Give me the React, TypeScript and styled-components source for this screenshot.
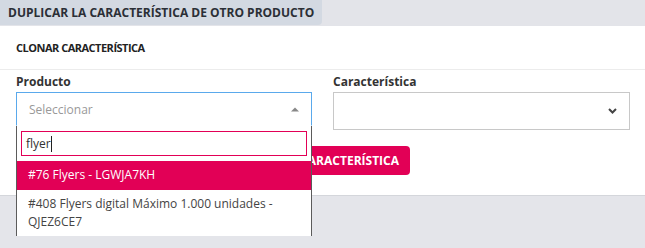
import React from "react"
import styled, { createGlobalStyle } from "styled-components"

const GlobalStyle = createGlobalStyle`
   html, body {
      margin: 0;
      padding: 0;
      background: #e4e5ea;
      font-family: "Open Sans", "Liberation Sans", sans-serif;
      color: #333;
   }
   * { box-sizing: border-box; }
`

const crimson = "#e20056"

const Page = styled.div`
   width: 645px;
   height: 248px;
   overflow: hidden;
   background: #e4e5ea;
`

const HeaderBar = styled.div`
   display: flex;
   height: 26px;
   background: #e3e4e9;
`

const HeaderTab = styled.h3`
   margin: 0;
   display: flex;
   align-items: center;
   width: 322px;
   height: 25px;
   padding: 0 8px;
   background: #d3d9e2;
   border-bottom-right-radius: 4px;
   font-size: 12px;
   font-weight: 700;
   color: #2b2f36;
   white-space: nowrap;
`

const Panel = styled.section`
   background: #fff;
   height: 170px;
   border-bottom: 1px solid #d4d6db;
`

const PanelTitle = styled.div`
   height: 44px;
   display: flex;
   align-items: center;
   padding: 0 16px;
   border-bottom: 1px solid #ececec;
   font-size: 11px;
   font-weight: 700;
   letter-spacing: -0.5px;
   color: #222;
`

const Form = styled.div`
   padding: 3px 15px 0 16px;
`

const Grid = styled.div`
   display: grid;
   grid-template-columns: 296px 297px;
   column-gap: 21px;
`

const Field = styled.div`
   position: relative;
   display: flex;
   flex-direction: column;
`

const Label = styled.label`
   font-size: 12px;
   font-weight: 700;
   line-height: 17px;
   height: 19px;
   color: #333;
`

const SelectBox = styled.div<{ $focused?: boolean; $tall?: boolean }>`
   position: relative;
   display: flex;
   align-items: center;
   height: ${(p) => (p.$tall ? "38px" : "34px")};
   padding: 0 12px;
   border: 1px solid ${(p) => (p.$focused ? "#5aa9ec" : "#c8c8c8")};
   border-bottom-color: ${(p) => (p.$focused ? "transparent" : "#c8c8c8")};
   background: #fff;
   font-size: 12px;
   color: #999;
`

const ArrowSlot = styled.span`
   margin-left: auto;
   display: flex;
   align-items: center;
`

const Dropdown = styled.div`
   position: absolute;
   left: 0;
   top: 53px;
   width: 296px;
   height: 110px;
   background: #fff;
   border: 1px solid #5b5b5b;
   border-top: none;
   z-index: 5;
`

const SearchWrap = styled.div`
   padding: 5px 4px;
`

const SearchField = styled.div`
   display: flex;
   align-items: center;
   height: 25px;
   padding: 0 4px;
   border: 1px solid ${crimson};
   font-size: 12px;
   color: #333;
`

const Caret = styled.span`
   display: inline-block;
   width: 1px;
   height: 16px;
   background: #222;
`

const Option = styled.div<{ $active?: boolean }>`
   padding: 5px 12px 5px 11px;
   font-size: 12px;
   line-height: 18px;
   background: ${(p) => (p.$active ? crimson : "#fff")};
   color: ${(p) => (p.$active ? "#fff" : "#444")};
   min-height: 29px;
`

const ButtonRow = styled.div`
   display: flex;
   justify-content: flex-end;
   width: 394px;
   margin-top: 16px;
`

const Button = styled.button`
   height: 29px;
   padding: 0 11px;
   border: none;
   border-radius: 4px;
   background: ${crimson};
   color: #fff;
   font-family: inherit;
   font-size: 12px;
   font-weight: 700;
   white-space: nowrap;
`

export default function App() {
   return (
      <Page>
         <GlobalStyle />
         <HeaderBar>
            <HeaderTab>DUPLICAR LA CARACTERÍSTICA DE OTRO PRODUCTO</HeaderTab>
         </HeaderBar>

         <Panel>
            <PanelTitle>CLONAR CARACTERÍSTICA</PanelTitle>

            <Form>
               <Grid>
                  <Field>
                     <Label>Producto</Label>
                     <SelectBox $focused>
                        Seleccionar
                        <ArrowSlot>
                           <svg width="8" height="5" viewBox="0 0 8 5">
                              <path d="M0 4.5 L4 0.5 L8 4.5 Z" fill="#888" />
                           </svg>
                        </ArrowSlot>
                     </SelectBox>

                     <Dropdown>
                        <SearchWrap>
                           <SearchField>
                              flyer<Caret />
                           </SearchField>
                        </SearchWrap>
                        <Option $active>#76 Flyers - LGWJA7KH</Option>
                        <Option>#408 Flyers digital Máximo 1.000 unidades - QJEZ6CE7</Option>
                     </Dropdown>
                  </Field>

                  <Field>
                     <Label>Característica</Label>
                     <SelectBox $tall>
                        <ArrowSlot>
                           <svg width="9" height="6" viewBox="0 0 9 6">
                              <path d="M1 1 L4.5 4.5 L8 1" fill="none" stroke="#444" strokeWidth="2" />
                           </svg>
                        </ArrowSlot>
                     </SelectBox>
                  </Field>
               </Grid>

               <ButtonRow>
                  <Button>CLONAR CARACTERÍSTICA</Button>
               </ButtonRow>
            </Form>
         </Panel>
      </Page>
   )
}
